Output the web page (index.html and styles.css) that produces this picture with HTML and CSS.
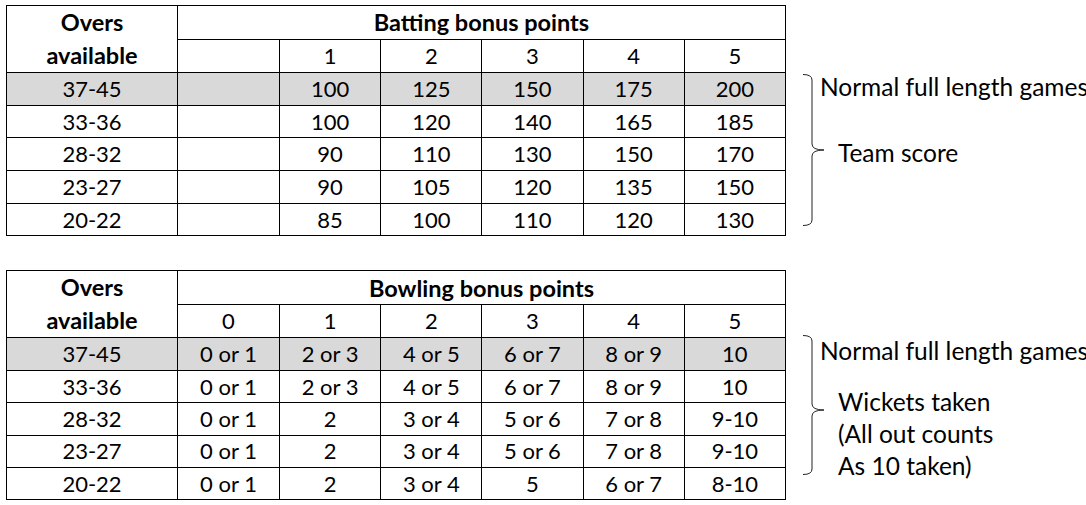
FILE: index.html
```
<!DOCTYPE html>
<html>
<head>
<meta charset="utf-8">
<link rel="stylesheet" href="styles.css">
</head>
<body>
<div class="page">
  <section class="block">
    <table class="grid">
      <colgroup>
        <col class="c-first"><col class="c-gap"><col class="c-n"><col class="c-n"><col class="c-n"><col class="c-n"><col class="c-n">
      </colgroup>
      <tr>
        <th rowspan="2" class="overs">Overs<br>available</th>
        <th colspan="6" class="title">Batting bonus points</th>
      </tr>
      <tr class="sub"><td></td><td>1</td><td>2</td><td>3</td><td>4</td><td>5</td></tr>
      <tr class="hl"><td>37-45</td><td></td><td>100</td><td>125</td><td>150</td><td>175</td><td>200</td></tr>
      <tr><td>33-36</td><td></td><td>100</td><td>120</td><td>140</td><td>165</td><td>185</td></tr>
      <tr><td>28-32</td><td></td><td>90</td><td>110</td><td>130</td><td>150</td><td>170</td></tr>
      <tr><td>23-27</td><td></td><td>90</td><td>105</td><td>120</td><td>135</td><td>150</td></tr>
      <tr><td>20-22</td><td></td><td>85</td><td>100</td><td>110</td><td>120</td><td>130</td></tr>
    </table>
    <div class="note note-bat">
      <svg class="brace" width="30" height="152" viewBox="0 0 30 152">
        <path d="M5 0.5 Q14 0.5 14 6 L14 70 Q14 76 26 76 Q14 76 14 82 L14 146 Q14 151.5 5 151.5" fill="none" stroke="#222" stroke-width="1"/>
      </svg>
      <div class="note-text">
        <p class="main">Normal full length games</p>
        <p class="sub-note">Team score</p>
      </div>
    </div>
  </section>

  <section class="block">
    <table class="grid grid-bowl">
      <colgroup>
        <col class="c-first"><col class="c-gap"><col class="c-n"><col class="c-n"><col class="c-n"><col class="c-n"><col class="c-n">
      </colgroup>
      <tr>
        <th rowspan="2" class="overs">Overs<br>available</th>
        <th colspan="6" class="title">Bowling bonus points</th>
      </tr>
      <tr class="sub"><td>0</td><td>1</td><td>2</td><td>3</td><td>4</td><td>5</td></tr>
      <tr class="hl"><td>37-45</td><td>0 or 1</td><td>2 or 3</td><td>4 or 5</td><td>6 or 7</td><td>8 or 9</td><td>10</td></tr>
      <tr><td>33-36</td><td>0 or 1</td><td>2 or 3</td><td>4 or 5</td><td>6 or 7</td><td>8 or 9</td><td>10</td></tr>
      <tr><td>28-32</td><td>0 or 1</td><td>2</td><td>3 or 4</td><td>5 or 6</td><td>7 or 8</td><td>9-10</td></tr>
      <tr><td>23-27</td><td>0 or 1</td><td>2</td><td>3 or 4</td><td>5 or 6</td><td>7 or 8</td><td>9-10</td></tr>
      <tr><td>20-22</td><td>0 or 1</td><td>2</td><td>3 or 4</td><td>5</td><td>6 or 7</td><td>8-10</td></tr>
    </table>
    <div class="note note-bowl">
      <svg class="brace" width="30" height="140" viewBox="0 0 30 140">
        <path d="M5 0.5 Q14 0.5 14 6 L14 69 Q14 75 26 75 Q14 75 14 81 L14 134 Q14 139.5 5 139.5" fill="none" stroke="#222" stroke-width="1"/>
      </svg>
      <div class="note-text">
        <p class="main">Normal full length games</p>
        <p class="sub-note">Wickets taken<br>(All out counts<br>As 10 taken)</p>
      </div>
    </div>
  </section>
</div>
</body>
</html>
```
FILE: styles.css
```
html, body {
  margin: 0;
  padding: 0;
  background: #fff;
  overflow: hidden;
}
body {
  width: 1086px;
  height: 505px;
  font-family: "Lato", "Open Sans", sans-serif;
  color: #000;
}
.page {
  display: flex;
  flex-direction: column;
  gap: 34px;
  padding: 5px 0 0 6px;
}
.block {
  display: flex;
  align-items: flex-start;
}
.grid {
  border-collapse: collapse;
  table-layout: fixed;
  width: 779px;
  flex: none;
  font-size: 22px;
}
.c-first { width: 171px; }
.c-gap { width: 102px; }
.c-n { width: 101.2px; }
.grid th, .grid td {
  border: 1px solid #000;
  padding: 0;
  height: 31.7px;
  text-align: center;
  vertical-align: middle;
  line-height: 30px;
}
.grid-bowl th, .grid-bowl td {
  height: 31.4px;
}
.grid th {
  font-weight: 700;
  font-size: 23.5px;
}
.grid .overs {
  line-height: 33px;
}
.grid tr.hl td {
  background: #d9d9d9;
}
.note {
  display: flex;
  margin-left: 12px;
  flex: none;
}
.brace {
  flex: none;
  overflow: visible;
  margin-right: -8px;
}
.note-bat .brace { margin-top: 69px; }
.note-bowl .brace { margin-top: 65px; }
.note-text p {
  margin: 0;
  font-size: 24.5px;
  white-space: nowrap;
}
.note-text .main {
  line-height: 33px;
}
.note-bat .main { margin-top: 65px; }
.note-bowl .main { margin-top: 64px; }
.note-text .sub-note {
  margin-left: 18px;
  line-height: 32px;
}
.note-bat .sub-note { margin-top: 34px; }
.note-bowl .sub-note { margin-top: 19px; }
```
